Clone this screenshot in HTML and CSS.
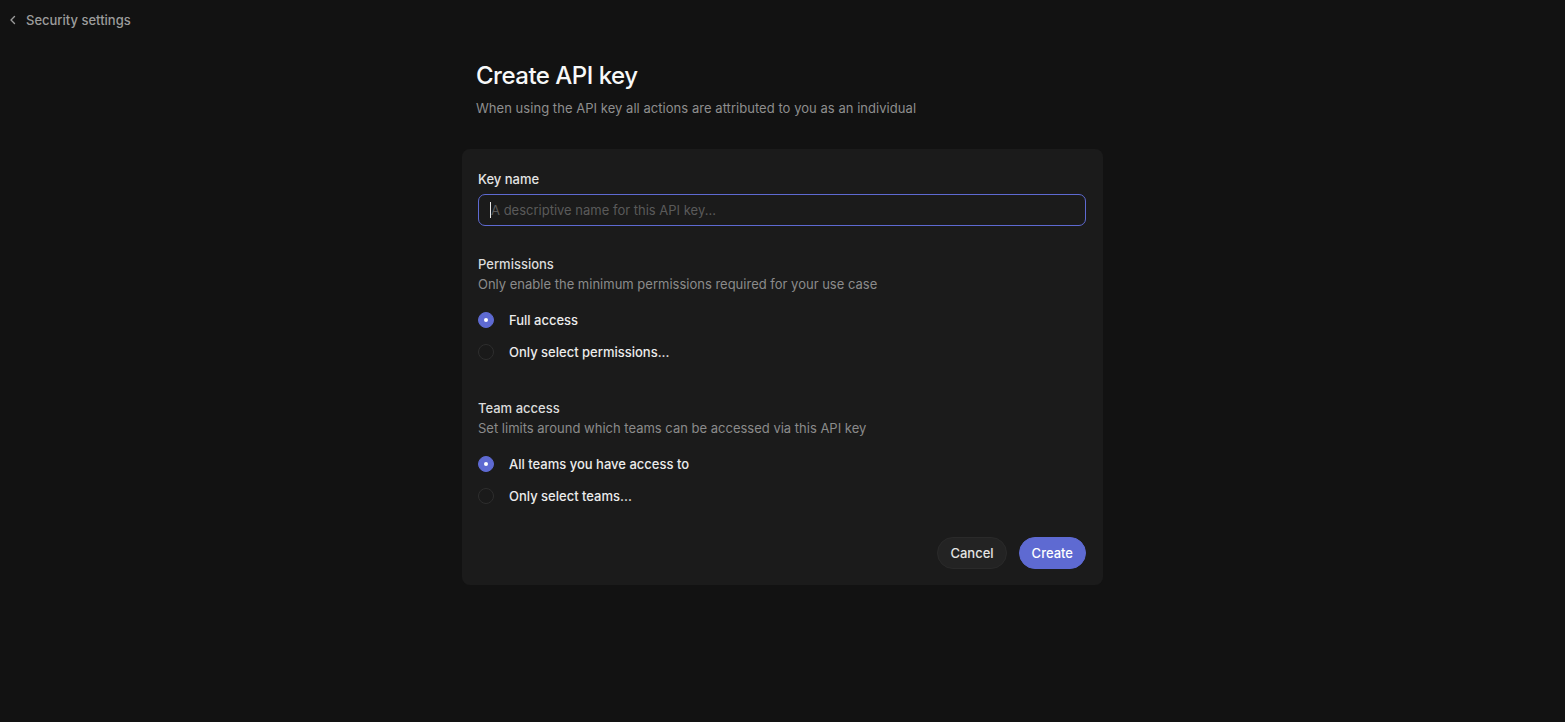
FILE: index.html
```html
<!DOCTYPE html>
<html lang="en">
<head>
<meta charset="utf-8">
<title>Create API key</title>
<link rel="stylesheet" href="styles.css">
</head>
<body>
<header class="topbar">
  <a class="back" href="#">
    <svg class="chev" width="12" height="12" viewBox="0 0 12 12"><path d="M7.5 2.5 L4 6 L7.5 9.5" fill="none" stroke="currentColor" stroke-width="1.4" stroke-linecap="round" stroke-linejoin="round"/></svg>
    <span>Security settings</span>
  </a>
</header>
<main class="page">
  <div class="heading">
    <h1>Create API key</h1>
    <p class="sub">When using the API key all actions are attributed to you as an individual</p>
  </div>
  <section class="card">
    <label class="label" for="keyname">Key name</label>
    <div class="inputwrap">
      <input id="keyname" class="input" type="text" placeholder="A descriptive name for this API key...">
      <span class="caret"></span>
    </div>

    <div class="group first">
      <div class="gtitle">Permissions</div>
      <div class="gdesc">Only enable the minimum permissions required for your use case</div>
      <div class="options">
        <div class="opt"><span class="radio on"></span><span class="otext">Full access</span></div>
        <div class="opt"><span class="radio"></span><span class="otext">Only select permissions...</span></div>
      </div>
    </div>

    <div class="group">
      <div class="gtitle">Team access</div>
      <div class="gdesc">Set limits around which teams can be accessed via this API key</div>
      <div class="options">
        <div class="opt"><span class="radio on"></span><span class="otext">All teams you have access to</span></div>
        <div class="opt"><span class="radio"></span><span class="otext">Only select teams...</span></div>
      </div>
    </div>

    <div class="actions">
      <button class="btn cancel">Cancel</button>
      <button class="btn create">Create</button>
    </div>
  </section>
</main>
</body>
</html>
```

FILE: styles.css
```css
* { box-sizing: border-box; }
html, body { margin: 0; padding: 0; }
body {
  background: #121212;
  color: #e6e6e6;
  font-family: Inter, "Noto Sans", "Liberation Sans", sans-serif;
  font-size: 13px;
  min-height: 722px;
}
.topbar {
  height: 40px;
  display: flex;
  align-items: center;
  padding-left: 7px;
}
.back {
  display: flex;
  align-items: center;
  gap: 7px;
  color: #9c9c9c;
  text-decoration: none;
  font-weight: 500;
  font-size: 13px;
  line-height: 20px;
}
.chev { color: #9c9c9c; }
.page {
  width: 641px;
  margin: 20px auto 0;
}
.heading { padding-left: 14px; }
h1 {
  margin: 0;
  font-size: 24px;
  line-height: 32px;
  font-weight: 500;
  color: #f7f8f8;
  letter-spacing: -0.5px;
}
.sub {
  margin: 6px 0 0;
  font-size: 13px;
  line-height: 20px;
  color: #8e8e8e;
  letter-spacing: 0.04px;
}
.card {
  margin-top: 31px;
  background: #1b1b1b;
  border-radius: 8px;
  padding: 20px 17px 16px 16px;
}
.label {
  display: block;
  font-weight: 500;
  line-height: 20px;
  color: #e4e4e4;
}
.inputwrap {
  position: relative;
  margin-top: 5px;
}
.input {
  display: block;
  width: 100%;
  height: 32px;
  background: #1b1b1b;
  border: 1px solid #5e6ad2;
  border-radius: 7px;
  padding: 0 12px;
  color: #e6e6e6;
  font-family: inherit;
  font-size: 13px;
  outline: none;
}
.input::placeholder { color: #5a5a5a; }
.caret {
  position: absolute;
  left: 12px;
  top: 8px;
  width: 1px;
  height: 16px;
  background: #e6e6e6;
}
.group { margin-top: 30px; }
.group.first { margin-top: 28px; }
.gtitle {
  font-weight: 500;
  line-height: 20px;
  color: #dcdcdc;
}
.gdesc {
  line-height: 20px;
  color: #8b8b8b;
}
.options { margin-top: 10px; }
.opt {
  height: 32px;
  display: flex;
  align-items: center;
  gap: 15px;
}
.radio {
  width: 16px;
  height: 16px;
  border-radius: 50%;
  border: 1px solid #2e2e2e;
  background: #1a1a1a;
  display: flex;
  align-items: center;
  justify-content: center;
  flex: none;
}
.radio.on {
  background: #5e6ad2;
  border-color: #5e6ad2;
}
.radio.on::after {
  content: "";
  width: 4px;
  height: 4px;
  border-radius: 50%;
  background: #ffffff;
}
.otext {
  font-weight: 500;
  color: #ececec;
  line-height: 20px;
}
.actions {
  margin-top: 25px;
  display: flex;
  justify-content: flex-end;
  gap: 12px;
}
.btn {
  height: 32px;
  border-radius: 16px;
  font-family: inherit;
  font-size: 13px;
  font-weight: 500;
  padding: 0 12px;
  cursor: pointer;
}
.cancel {
  background: #232323;
  border: 1px solid #2a2a2a;
  color: #e4e4e4;
}
.create {
  background: #5e6ad2;
  border: 1px solid #5e6ad2;
  color: #ffffff;
}
```
